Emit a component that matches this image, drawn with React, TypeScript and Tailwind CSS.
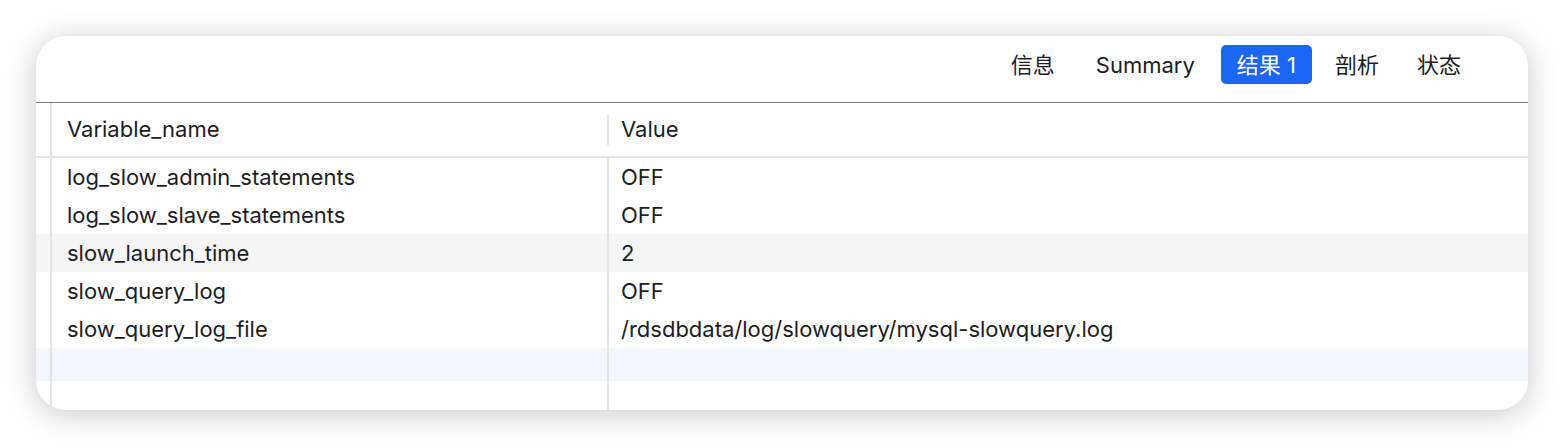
import React from "react";

const tabs = [
  { label: "信息", gap: 0 },
  { label: "Summary", gap: 9 },
  { label: "结果 1", gap: 10, active: true },
  { label: "剖析", gap: 7 },
  { label: "状态", gap: 6 },
];

const rows = [
  { name: "log_slow_admin_statements", value: "OFF" },
  { name: "log_slow_slave_statements", value: "OFF" },
  { name: "slow_launch_time", value: "2", striped: true },
  { name: "slow_query_log", value: "OFF" },
  { name: "slow_query_log_file", value: "/rdsdbdata/log/slowquery/mysql-slowquery.log" },
];

const font = {
  fontFamily: '"Inter", "Noto Sans CJK SC", "Liberation Sans", sans-serif',
};

// one body row: gutter + two columns, lines drawn as borders
const Row: React.FC<{ name?: string; value?: string; className?: string }> = ({
  name,
  value,
  className = "",
}) => (
  <div className={`flex ${className}`}>
    <div className="w-[16px] shrink-0 border-r-2 border-[#e3e3e3]" />
    <div className="w-[557px] shrink-0 border-r-2 border-[#e3e3e3] pl-[15px] flex items-center">
      {name}
    </div>
    <div className="flex-1 pl-[12px] flex items-center">{value}</div>
  </div>
);

export default function App() {
  return (
    <div className="w-[1564px] h-[448px] bg-white p-[36px]" style={font}>
      <div className="h-[374px] flex flex-col bg-white rounded-[30px] overflow-hidden shadow-[0_4px_30px_rgba(0,0,0,0.22)] text-[22px] text-[#1d1d1f]">
        {/* toolbar with tabs */}
        <div className="h-[67px] shrink-0 border-b border-[#7c7c7c] flex justify-end items-start pt-[9px] pr-[51px]">
          {tabs.map((t) => (
            <div
              key={t.label}
              style={{ marginLeft: t.gap }}
              className={`h-[39px] px-[16px] flex items-center rounded-[5px] leading-none ${
                t.active ? "bg-[#1b66f4] text-white" : "text-[#1d1d1f]"
              }`}
            >
              {t.label}
            </div>
          ))}
        </div>

        {/* table header */}
        <div className="h-[55px] shrink-0 flex border-b-2 border-[#e3e3e3]">
          <div className="w-[16px] shrink-0 border-r-2 border-[#e3e3e3]" />
          <div className="w-[555px] shrink-0 pl-[15px] flex items-center">Variable_name</div>
          <div className="flex items-center">
            <div className="w-[2px] h-[30px] bg-[#e3e3e3]" />
          </div>
          <div className="flex-1 pl-[12px] flex items-center">Value</div>
        </div>

        {/* table body */}
        <div className="flex-1 flex flex-col">
          {rows.map((r) => (
            <Row
              key={r.name}
              name={r.name}
              value={r.value}
              className={`h-[38px] ${r.striped ? "bg-[#f5f5f5]" : ""}`}
            />
          ))}
          <Row className="h-[33px] bg-[#f2f6fd]" />
          <Row className="flex-1" />
        </div>
      </div>
    </div>
  );
}
